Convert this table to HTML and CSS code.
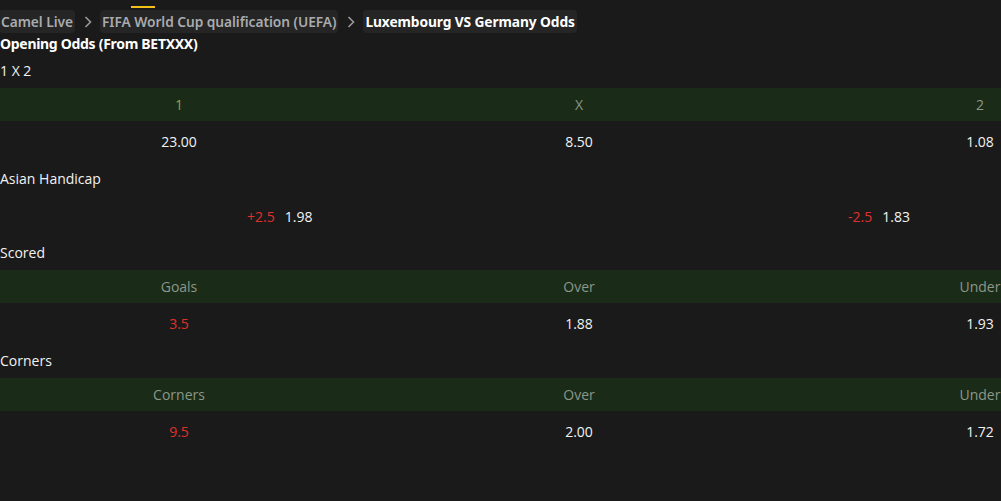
FILE: index.html
```html
<!DOCTYPE html>
<html lang="en">
<head>
<meta charset="utf-8">
<title>Luxembourg VS Germany Odds</title>
<link rel="stylesheet" href="styles.css">
</head>
<body>
<nav class="crumbs">
  <span class="indicator"></span>
  <a class="crumb">Camel Live</a>
  <svg class="chev" width="8" height="12" viewBox="0 0 8 12"><path d="M1.5 1 L6.5 6 L1.5 11" fill="none" stroke="#9a9a9a" stroke-width="1.6"/></svg>
  <a class="crumb">FIFA World Cup qualification (UEFA)</a>
  <svg class="chev" width="8" height="12" viewBox="0 0 8 12"><path d="M1.5 1 L6.5 6 L1.5 11" fill="none" stroke="#9a9a9a" stroke-width="1.6"/></svg>
  <span class="crumb current">Luxembourg VS Germany Odds</span>
</nav>
<h1 class="page-title">Opening Odds (From BETXXX)</h1>

<section class="market">
  <h2 class="market-title">1 X 2</h2>
  <div class="grid3 head">
    <div class="cell home">1</div>
    <div class="cell">X</div>
    <div class="cell last">2</div>
  </div>
  <div class="grid3 vals">
    <div class="cell">23.00</div>
    <div class="cell">8.50</div>
    <div class="cell last">1.08</div>
  </div>
</section>

<section class="market">
  <h2 class="market-title">Asian Handicap</h2>
  <div class="grid2 vals ah">
    <div class="pair"><span class="red">+2.5</span><span>1.98</span></div>
    <div class="pair"><span class="red">-2.5</span><span>1.83</span></div>
  </div>
</section>

<section class="market">
  <h2 class="market-title">Scored</h2>
  <div class="grid3 head">
    <div class="cell">Goals</div>
    <div class="cell">Over</div>
    <div class="cell last">Under</div>
  </div>
  <div class="grid3 vals">
    <div class="cell red">3.5</div>
    <div class="cell">1.88</div>
    <div class="cell last">1.93</div>
  </div>
</section>

<section class="market">
  <h2 class="market-title">Corners</h2>
  <div class="grid3 head">
    <div class="cell">Corners</div>
    <div class="cell">Over</div>
    <div class="cell last">Under</div>
  </div>
  <div class="grid3 vals">
    <div class="cell red">9.5</div>
    <div class="cell">2.00</div>
    <div class="cell last">1.72</div>
  </div>
</section>
</body>
</html>
```
FILE: styles.css
```css
* { box-sizing: border-box; }
html, body {
  margin: 0;
  padding: 0;
  background: #1a1a1a;
  color: #f2f2f2;
  font-family: "Open Sans", "Noto Sans", sans-serif;
  font-size: 14px;
}
.crumbs {
  position: relative;
  display: flex;
  align-items: center;
  height: 33px;
  padding-top: 10px;
  margin-left: -1px;
  font-family: "Noto Sans", "Open Sans", sans-serif;
  font-weight: 600;
  font-size: 13.75px;
  letter-spacing: -0.05px;
}
.indicator {
  position: absolute;
  left: 132px;
  top: 6px;
  width: 24px;
  height: 2px;
  background: #f2c21b;
}
.crumb {
  display: flex;
  align-items: center;
  height: 23px;
  padding: 0 2px;
  background: #252525;
  border-radius: 4px;
  color: #a9abae;
  text-decoration: none;
  white-space: nowrap;
}
.crumb.current { color: #ffffff; font-weight: 700; letter-spacing: -0.1px; }
.chev { margin: 0 8px 0 9px; flex: none; }
.page-title {
  margin: 1px 0 0;
  height: 20px;
  line-height: 20px;
  font-family: "Noto Sans", "Open Sans", sans-serif;
  font-weight: 700;
  font-size: 14px;
  letter-spacing: -0.3px;
  color: #ffffff;
}
.market-title {
  margin: 0;
  height: 34px;
  line-height: 34px;
  font-weight: 400;
  font-size: 14px;
  color: #f2f2f2;
}
.grid3 {
  display: grid;
  grid-template-columns: 358px 442px 1fr;
  align-items: center;
}
.grid3 .cell { text-align: center; }
.grid3 .cell.last { justify-self: end; width: 42px; }
.head {
  height: 33px;
  background: #1a2b18;
  color: #8b978a;
}
.head .home { color: #a09d45; }
.vals { height: 41px; }
.grid2 {
  display: grid;
  grid-template-columns: 601px 1fr;
  align-items: center;
}
.ah { height: 40px; }
.pair {
  display: flex;
  gap: 10px;
  padding-left: 247px;
}
.red { color: #e0302b; }
```
